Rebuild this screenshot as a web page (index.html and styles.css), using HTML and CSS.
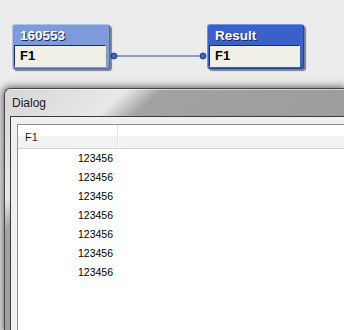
FILE: index.html
```html
<!DOCTYPE html>
<html>
<head>
<meta charset="utf-8">
<link rel="stylesheet" href="styles.css">
</head>
<body>
<div class="canvas">
  <svg class="wire" width="344" height="88" viewBox="0 0 344 88">
    <line x1="114" y1="56" x2="203" y2="56" stroke="#8e9dc4" stroke-width="2"/>
    <circle cx="114" cy="56" r="3" fill="#3a64c8" stroke="#223f8c" stroke-width="1"/>
    <circle cx="203" cy="56" r="3" fill="#3a64c8" stroke="#223f8c" stroke-width="1"/>
  </svg>
  <div class="node node-src">
    <div class="node-title">160553</div>
    <div class="node-field">F1</div>
  </div>
  <div class="node node-res">
    <div class="node-title">Result</div>
    <div class="node-field">F1</div>
  </div>
</div>
<div class="dialog">
  <div class="titlebar">Dialog</div>
  <div class="client">
    <div class="grid">
      <div class="grid-head">
        <div class="hcell col1">F1</div>
        <div class="hcell col2"></div>
      </div>
      <div class="grid-row"><div class="cell col1">123456</div></div>
      <div class="grid-row"><div class="cell col1">123456</div></div>
      <div class="grid-row"><div class="cell col1">123456</div></div>
      <div class="grid-row"><div class="cell col1">123456</div></div>
      <div class="grid-row"><div class="cell col1">123456</div></div>
      <div class="grid-row"><div class="cell col1">123456</div></div>
      <div class="grid-row"><div class="cell col1">123456</div></div>
    </div>
  </div>
</div>
</body>
</html>
```
FILE: styles.css
```css
html, body {
  margin: 0;
  padding: 0;
  width: 344px;
  height: 330px;
  overflow: hidden;
  background: #ececec;
  font-family: "Liberation Sans", Arial, sans-serif;
}

.canvas {
  position: relative;
  height: 88px;
}

.wire {
  position: absolute;
  left: 0;
  top: 0;
}

.node {
  position: absolute;
  top: 24px;
  box-sizing: border-box;
  height: 45px;
  border: 1px solid;
  border-radius: 3px;
  padding: 0 3px 2px 1px;
  display: flex;
  flex-direction: column;
  box-shadow: 2px 2px 1px rgba(40, 40, 40, 0.55);
}

.node-src {
  left: 12px;
  width: 98px;
  background: #7d9bdb;
  border-color: #aec2ee #4f6bb0 #4f6bb0 #aec2ee;
}

.node-res {
  left: 207px;
  width: 97px;
  background: #3a61cb;
  border-color: #7393e2 #23439a #23439a #7393e2;
}

.node-title {
  height: 20px;
  line-height: 21px;
  padding-left: 6px;
  color: #ffffff;
  font-weight: bold;
  font-size: 13.5px;
  text-shadow: 1px 1px 0 #1c2850;
}

.node-field {
  flex: 1;
  background: #f0f0e6;
  border-style: solid;
  border-width: 1px;
  border-color: #1f2d55 #e4e9f4 #e4e9f4 #1f2d55;
  padding-left: 5px;
  line-height: 20px;
  font-weight: bold;
  font-size: 13px;
  color: #000;
}

.dialog {
  margin-left: 4px;
  width: 340px;
  height: 242px;
  box-sizing: border-box;
  border-top: 1px solid #444;
  border-left: 1px solid #444;
  border-radius: 6px 0 0 0;
  background: linear-gradient(138deg, #d6d6d6 0px, #e8e8e8 82px, #a2a2a2 106px, #969696 100%);
  box-shadow: 0 0 7px 2px rgba(0, 0, 0, 0.5);
  padding: 0 0 0 5px;
  display: flex;
  flex-direction: column;
}

.titlebar {
  height: 27px;
  line-height: 28px;
  padding-left: 2px;
  font-size: 12px;
  color: #1a1a1a;
  box-shadow: inset 0 1px 0 rgba(255, 255, 255, 0.55);
}

.client {
  flex: 1;
  background: #f0f0f0;
  border-top: 1px solid #3c3c3c;
  border-left: 1px solid #3c3c3c;
  padding: 7px 0 0 6px;
}

.grid {
  height: 100%;
  background: #fff;
  border-top: 1px solid #8d9095;
  border-left: 1px solid #8d9095;
}

.grid-head {
  display: flex;
  height: 23px;
  border-bottom: 1px solid #d5d5d5;
  background: linear-gradient(#ffffff 0, #ffffff 11px, #f1f2f4 11px, #f1f2f4 100%);
}

.hcell {
  font-size: 11px;
  line-height: 24px;
  color: #1e1e1e;
}

.hcell.col1 {
  width: 100px;
  padding-left: 7px;
  box-sizing: border-box;
  border-right: 1px solid #e2e3e5;
  box-shadow: 1px 0 0 #ffffff;
}

.hcell.col2 {
  flex: 1;
}

.grid-row {
  display: flex;
  height: 19px;
}

.cell.col1 {
  width: 100px;
  box-sizing: border-box;
  padding-right: 5px;
  text-align: right;
  font-size: 10.5px;
  line-height: 19px;
  color: #000;
}
```
